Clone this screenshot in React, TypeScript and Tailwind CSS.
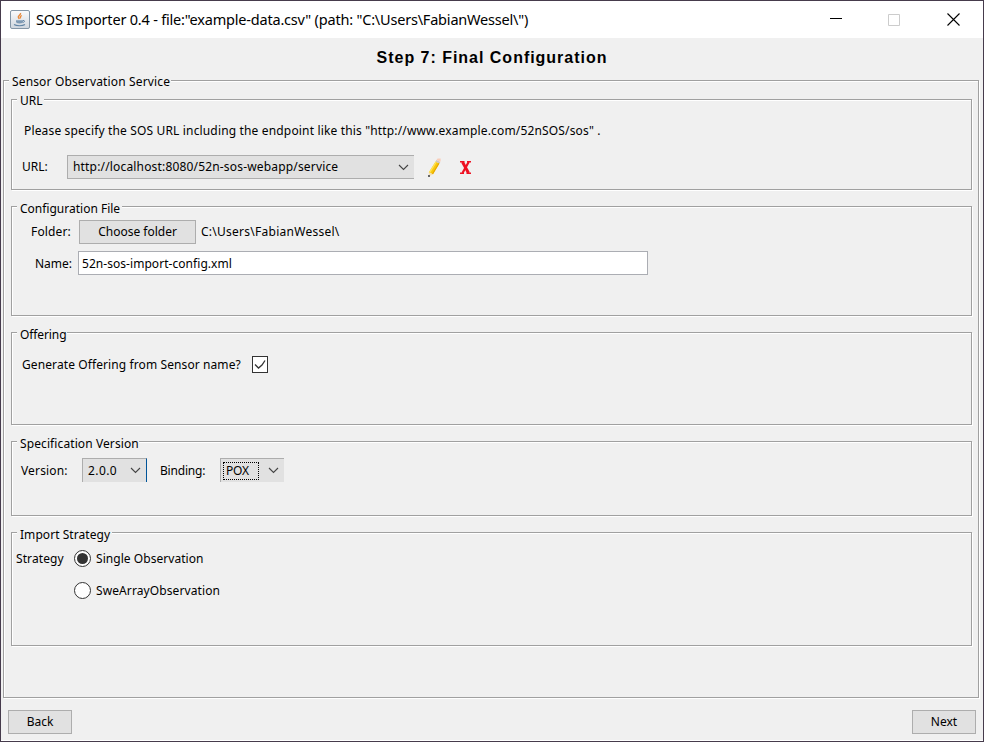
import type { ReactNode } from "react";

function Group({
  title,
  legendClass = "",
  className = "",
  children,
}: {
  title: string;
  legendClass?: string;
  className?: string;
  children: ReactNode;
}) {
  return (
    <section
      className={`flex flex-col items-stretch border border-[#a0a0a0] shadow-[1px_1px_0_#fff,inset_1px_1px_0_#fff] ${className}`}
    >
      <div className={`-mt-[7px] ml-[5px] h-4 self-start bg-[#f0f0f0] pl-[3px] ${legendClass}`}>{title}</div>
      {children}
    </section>
  );
}

function Chevron() {
  return (
    <svg width="11" height="7" viewBox="0 0 11 7" fill="none" stroke="#444" strokeWidth="1.1">
      <path d="M1 1l4.5 4.5L10 1" />
    </svg>
  );
}

function JavaIcon() {
  return (
    <svg width="20" height="19" viewBox="0 0 20 19" fill="none">
      <defs>
        <linearGradient id="tile" x1="0" y1="0" x2="0" y2="1">
          <stop offset="0" stopColor="#fafbfc" />
          <stop offset="1" stopColor="#cfd6de" />
        </linearGradient>
      </defs>
      <rect x="0.5" y="0.5" width="19" height="18" rx="1.5" fill="url(#tile)" stroke="#8496a6" />
      <path d="M10.5 3c.8 1.700-2.400 2.500-2.200 4 .1.800.8 1.200 1 2M11.800 5.500c-1.500.9-2 1.600-1.100 2.800" stroke="#e88a3c" strokeWidth="1.400" />
      <path d="M6 10.300h7v1c0 1.500-1 2.200-3.500 2.200S6 12.800 6 11.300z" fill="#7d99b3" />
      <path d="M13 10.500c2-.4 2.300 1.600-.3 2" stroke="#6285a5" />
      <path d="M4 14.600c2.500 1.500 8.500 1.500 11 0" stroke="#6285a5" strokeWidth="1.200" />
    </svg>
  );
}

function PencilIcon() {
  return (
    <svg width="15" height="20" viewBox="0 0 15 20">
      <path d="M1.800 14.500L8.600 3.500l3.800 2L6 16.200z" fill="#f8c80c" />
      <path d="M1.800 14.500L8.600 3.500l1.200.6L3.200 15z" fill="#ffe25a" />
      <path d="M5 15.700L11.500 5l.9.500L6 16.200z" fill="#e6a400" />
      <path d="M8.600 3.500l.9-1.600 3.800 2-.9 1.600z" fill="#c9c4bd" />
      <path d="M9.500 1.900L10.600.500h3v2.600l-.6.800z" fill="#f8cdb9" />
      <path d="M1.800 14.500L6 16.200 2 18.500z" fill="#f3dfb4" />
      <path d="M1 17h2v2H1z" fill="#666" />
    </svg>
  );
}

function DeleteIcon() {
  return (
    <svg width="11" height="13" viewBox="0 0 11 13" fill="none" stroke="#ee1122">
      <path d="M2.500 1l6 11" strokeWidth="2.900" />
      <path d="M8.700 1L2.500 12" strokeWidth="2.200" />
      <path d="M0 .8h4.500M7 .8h4M0 12.200h4M6.500 12.200h4.500" strokeWidth="1.500" />
    </svg>
  );
}

function Radio({ checked = false }: { checked?: boolean }) {
  return (
    <span className="flex size-[17px] shrink-0 items-center justify-center rounded-full border border-[#333] bg-white">
      {checked && <span className="size-[11px] rounded-full bg-[#333]" />}
    </span>
  );
}

const button =
  "flex h-6 items-center justify-center border border-[#adadad] bg-[#e1e1e1] whitespace-nowrap";

export default function App() {
  return (
    <div className="flex h-[742px] w-[984px] flex-col overflow-hidden border border-[#463b4c] bg-[#f0f0f0] font-['Noto_Sans',sans-serif] text-[12px] leading-4 text-black">
      <header className="flex h-[37px] shrink-0 items-center bg-white pl-[9px]">
        <JavaIcon />
        <h1 className="ml-[6px] pb-[2px] text-[14.5px] leading-5 tracking-[-0.2px] whitespace-pre">
          SOS Importer 0.4 - file:"example-data.csv" (path: "C:\Users\FabianWessel\")
        </h1>
        <div className="mr-[23px] ml-auto flex items-center gap-[46px]">
          <svg width="12" height="13" viewBox="0 0 12 13" stroke="#000">
            <path d="M0 5.500h12" />
          </svg>
          <svg className="mr-px" width="12" height="12" viewBox="0 0 12 12" fill="none" stroke="#ccc">
            <path d="M.5.5h11v11H.5z" />
          </svg>
          <svg width="13" height="13" viewBox="0 0 13 13" stroke="#000" strokeWidth="1.100">
            <path d="M.5.5l12 12M12.500.5l-12 12" />
          </svg>
        </div>
      </header>
      <h2 className="flex h-[42px] shrink-0 items-center justify-center pb-[3px] font-['Liberation_Sans',Arial,sans-serif] text-[16px] font-bold tracking-[0.98px]">
        Step 7: Final Configuration
      </h2>
      <Group
        title="Sensor Observation Service"
        legendClass="tracking-[0.15px] pr-px"
        className="mr-[4px] ml-[2px] h-[618px] shrink-0"
      >
        <div className="mt-[9px] mr-[6px] ml-[7px] flex flex-col gap-4">
          <Group title="URL" legendClass="pr-px" className="h-[91px]">
            <p className="mt-[14px] ml-[12px] tracking-[0.157px] whitespace-pre">
              Please specify the SOS URL including the endpoint like this "http://www.example.com/52nSOS/sos" .
            </p>
            <div className="mt-[16px] ml-[10px] flex h-6 items-center">
              <span className="w-[45px]">URL:</span>
              <div className="flex h-6 w-[347px] items-center justify-between border border-r-0 border-[#adadad] bg-[#e1e1e1] pr-[5px] pl-[5px]">
                <span className="tracking-[0.17px]">http://localhost:8080/52n-sos-webapp/service</span>
                <Chevron />
              </div>
              <span className="ml-[13px] pt-[2px]">
                <PencilIcon />
              </span>
              <span className="ml-[18px]">
                <DeleteIcon />
              </span>
            </div>
          </Group>

          <Group title="Configuration File" legendClass="pt-px pr-[2px]" className="h-[110px]">
            <div className="mt-1 flex h-6 items-center">
              <span className="w-[67px] pl-[19px] tracking-[0.15px]">Folder:</span>
              <button className={`${button} w-[117px]`}>Choose folder</button>
              <span className="ml-[5px] tracking-[0.26px]">C:\Users\FabianWessel\</span>
            </div>
            <div className="mt-[7px] flex h-6 items-center">
              <span className="w-[66px] pt-[2px] pl-[23px]">Name:</span>
              <div className="flex h-6 w-[570px] items-center border border-[#abadb3] bg-white pt-[2px] pl-[3px] tracking-[0.05px]">
                52n-sos-import-config.xml
              </div>
            </div>
          </Group>

          <Group title="Offering" legendClass="pt-px pr-px tracking-[-0.1px]" className="h-[93px]">
            <div className="mt-[14px] flex h-[17px] items-center pl-[10px]">
              <span className="w-[230px] tracking-[0.1px]">Generate Offering from Sensor name?</span>
              <span className="flex h-[17px] w-4 items-center justify-center border border-[#333] bg-white">
                <svg width="12" height="11" viewBox="0 0 12 11" fill="none" stroke="#333" strokeWidth="1.300">
                  <path d="M1 5.500l3.500 3.500L8 6l3-4.500" />
                </svg>
              </span>
            </div>
          </Group>

          <Group title="Specification Version" legendClass="pt-px tracking-[0.1px]" className="h-[75px]">
            <div className="mt-[7px] flex h-6 items-center pl-[9px]">
              <span className="w-[61px] pt-[2px] tracking-[0.15px]">Version:</span>
              <div className="flex h-6 w-[65px] items-center justify-between border-t border-r border-l border-[#adadad] border-r-[#005499] bg-[#e1e1e1] pr-[5px] pl-[5px]">
                <span className="tracking-[0.4px]">2.0.0</span>
                <Chevron />
              </div>
              <span className="ml-[13px] w-[60px] pt-[2px] tracking-[-0.2px]">Binding:</span>
              <div className="flex h-6 w-[64px] items-center justify-between border-t border-l border-[#adadad] bg-[#e1e1e1] pr-[5px] pl-[2px]">
                <span className="flex h-[18px] w-9 items-center border border-dotted border-black pl-[2px] tracking-[-0.2px]">
                  POX
                </span>
                <Chevron />
              </div>
            </div>
          </Group>

          <Group title="Import Strategy" legendClass="pt-px pr-[2px] tracking-[0.05px]" className="h-[114px]">
            <div className="mt-2 flex h-[17px] items-center pl-1">
              <span className="w-[58px] tracking-[0.1px]">Strategy</span>
              <Radio checked />
              <span className="ml-[5px] tracking-[0.05px]">Single Observation</span>
            </div>
            <div className="mt-[15px] flex h-[17px] items-center pl-[62px]">
              <Radio />
              <span className="ml-[5px] tracking-[0.1px]">SweArrayObservation</span>
            </div>
          </Group>
        </div>
      </Group>
      <footer className="mt-auto flex h-[43px] shrink-0 items-start justify-between border-b border-white pt-[12px] pr-[7px] pl-[7px]">
        <button className={`${button} w-16`}>Back</button>
        <button className={`${button} w-16`}>Next</button>
      </footer>
    </div>
  );
}
